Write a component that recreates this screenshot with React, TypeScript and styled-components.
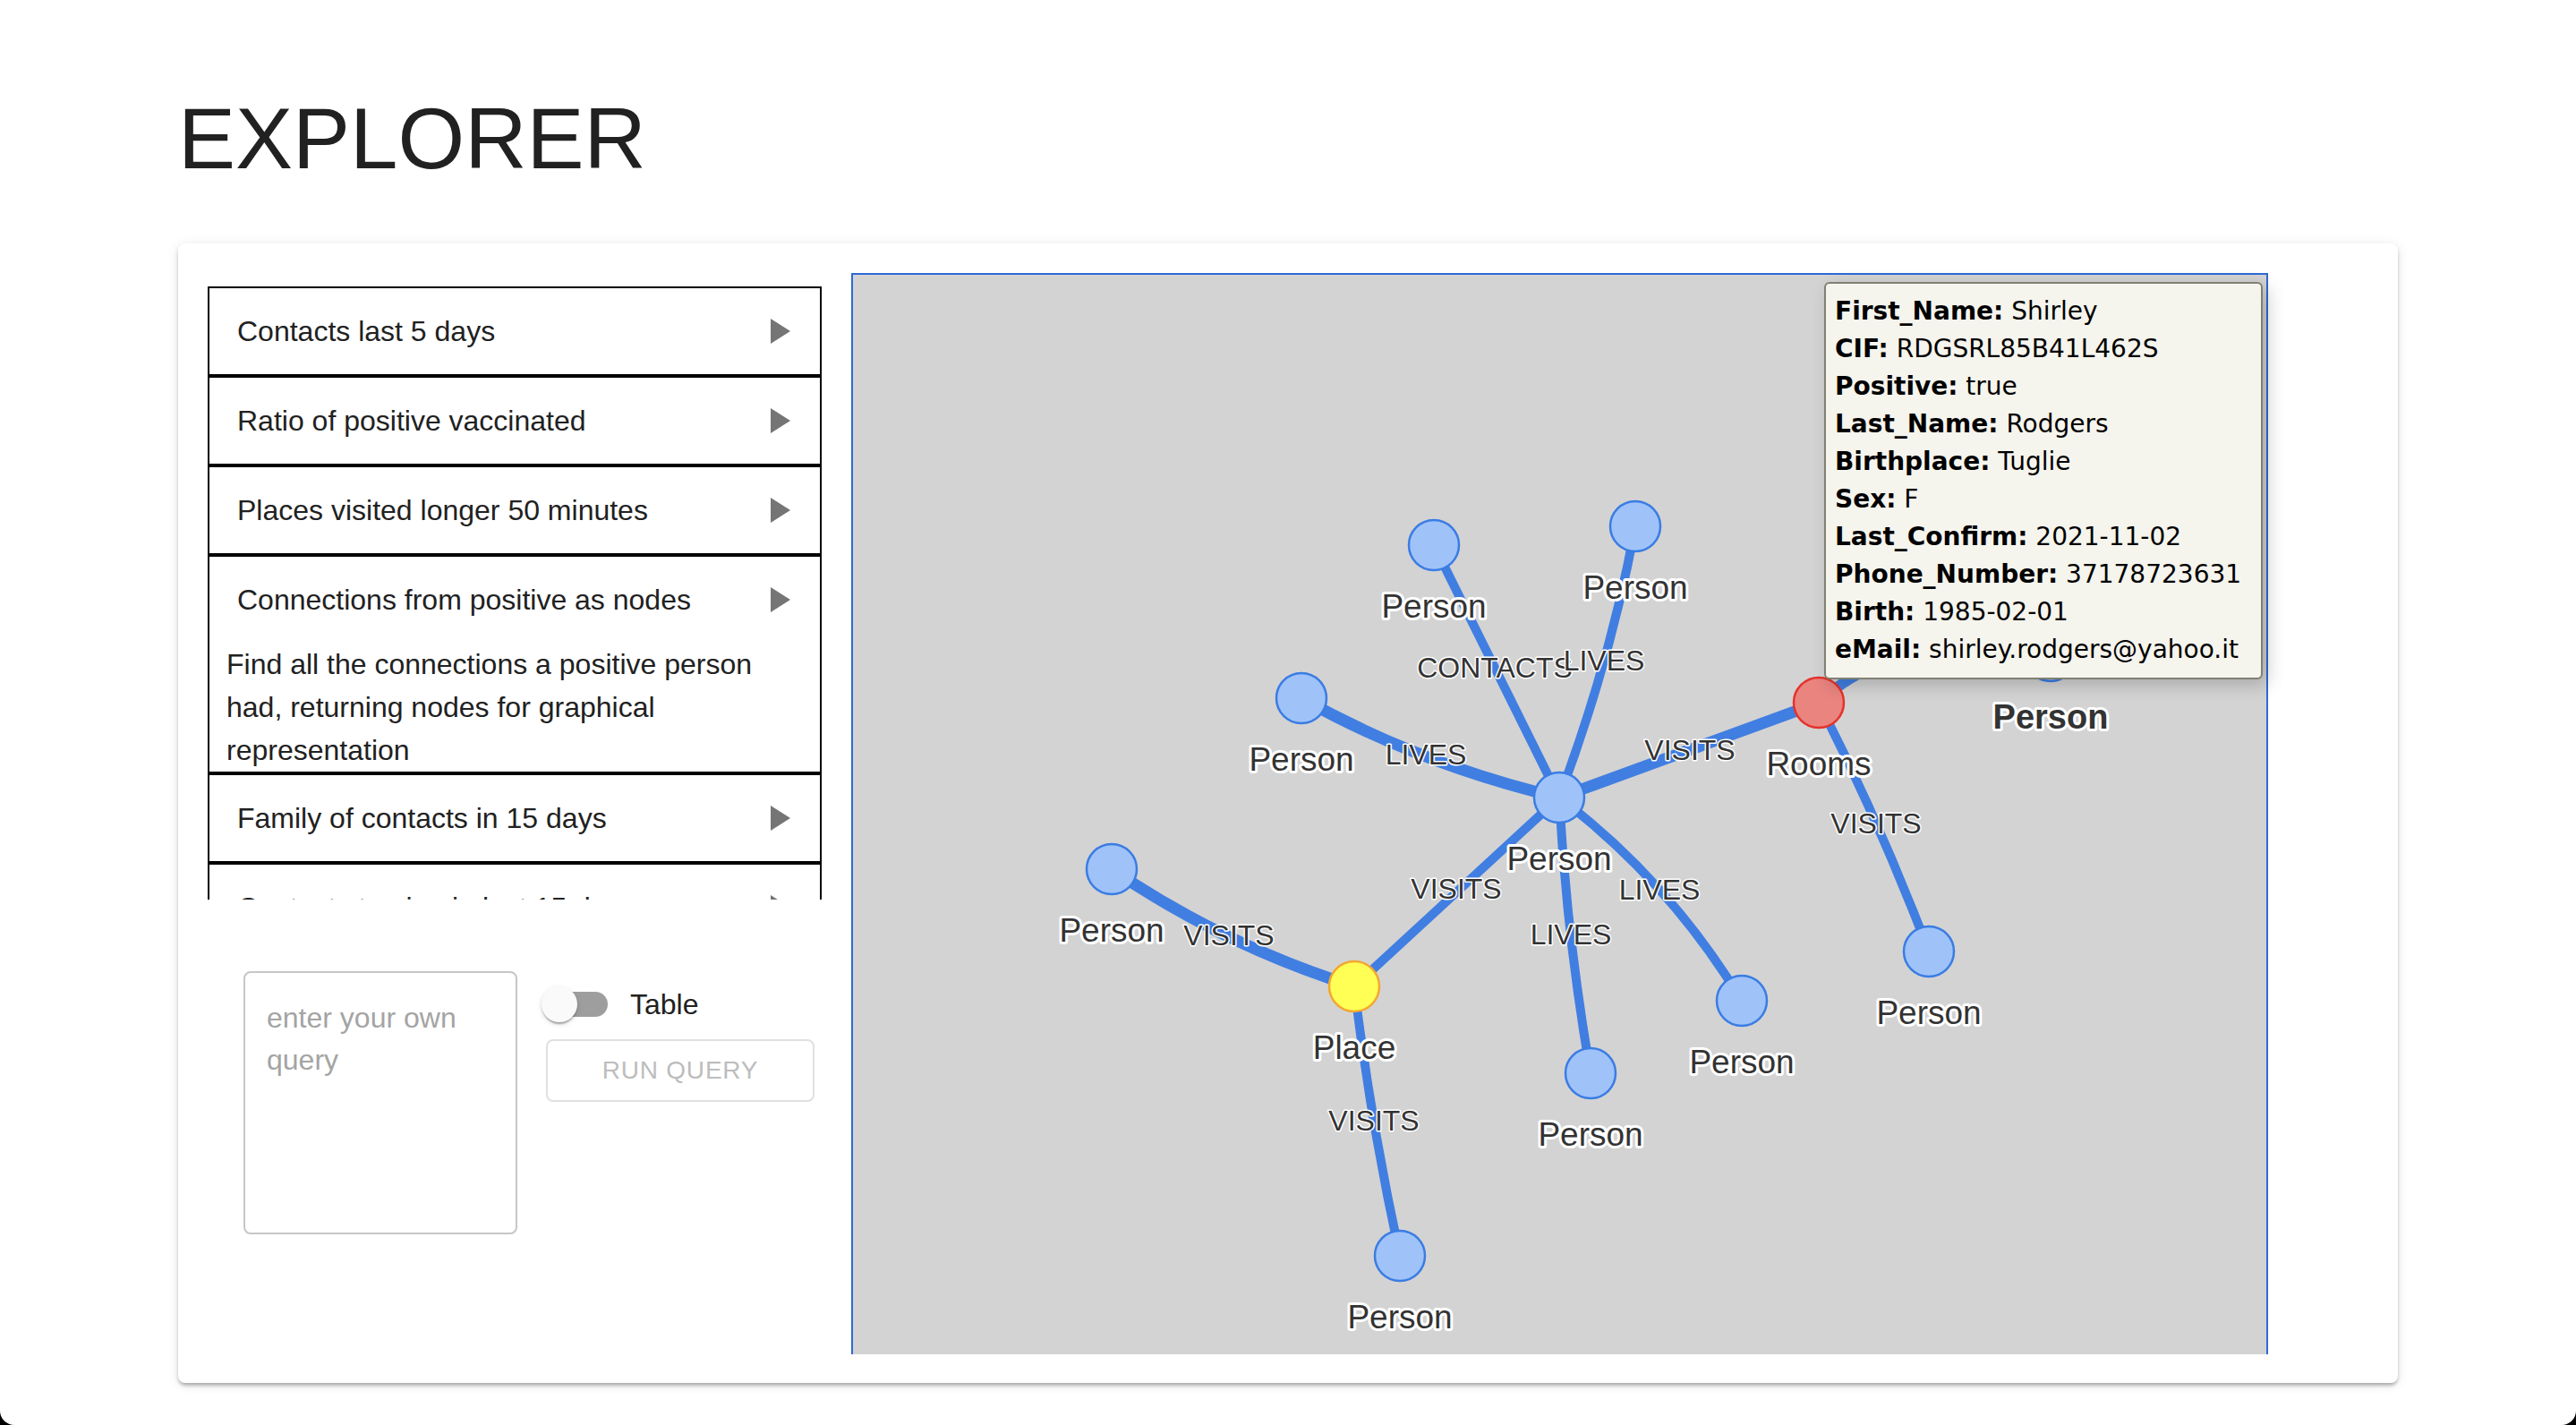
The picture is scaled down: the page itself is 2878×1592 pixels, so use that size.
import React from 'react'
import styled, { createGlobalStyle } from 'styled-components'

// ---------- data ----------
type Kind = 'person' | 'place' | 'positive'

type GraphNode = {
  id: string
  x: number
  y: number
  label: string
  kind?: Kind
  bold?: boolean
}

type GraphEdge = {
  from: string
  to: string
  label?: string
  lx?: number
  ly?: number
  // control point of the quadratic curve, if the edge bends
  cx?: number
  cy?: number
  width?: number
}

const queries = [
  { title: 'Contacts last 5 days' },
  { title: 'Ratio of positive vaccinated' },
  { title: 'Places visited longer 50 minutes' },
  {
    title: 'Connections from positive as nodes',
    description:
      'Find all the connections a positive person had, returning nodes for graphical representation'
  },
  { title: 'Family of contacts in 15 days' },
  { title: 'Contacts tracing in last 15 days' }
]

const nodes: GraphNode[] = [
  { id: 'i', x: 2290, y: 733, label: 'Person', bold: true },
  { id: 'n0', x: 1741, y: 891, label: 'Person' },
  { id: 'a', x: 1601, y: 609, label: 'Person' },
  { id: 'b', x: 1826, y: 588, label: 'Person' },
  { id: 'c', x: 1453, y: 780, label: 'Person' },
  { id: 'r', x: 2031, y: 785, label: 'Rooms', kind: 'positive' },
  { id: 'p', x: 1512, y: 1102, label: 'Place', kind: 'place' },
  { id: 'd', x: 1776, y: 1199, label: 'Person' },
  { id: 'e', x: 1945, y: 1118, label: 'Person' },
  { id: 'f', x: 1241, y: 971, label: 'Person' },
  { id: 'g', x: 1563, y: 1403, label: 'Person' },
  { id: 'h', x: 2154, y: 1063, label: 'Person' }
]

const edges: GraphEdge[] = [
  { from: 'r', to: 'i', cx: 2120, cy: 700, width: 12 },
  { from: 'n0', to: 'a', label: 'CONTACTS', lx: 1669, ly: 746, cx: 1667, cy: 742 },
  { from: 'n0', to: 'b', label: 'LIVES', lx: 1791, ly: 738, cx: 1799, cy: 736 },
  { from: 'n0', to: 'c', label: 'LIVES', lx: 1592, ly: 843, cx: 1585, cy: 854, width: 13 },
  { from: 'n0', to: 'r', label: 'VISITS', lx: 1887, ly: 838, width: 13 },
  { from: 'n0', to: 'p', label: 'VISITS', lx: 1626, ly: 993 },
  { from: 'n0', to: 'd', label: 'LIVES', lx: 1754, ly: 1044, cx: 1749, cy: 1043 },
  { from: 'n0', to: 'e', label: 'LIVES', lx: 1853, ly: 994, cx: 1863, cy: 983 },
  { from: 'p', to: 'f', label: 'VISITS', lx: 1372, ly: 1045, cx: 1366, cy: 1056, width: 13 },
  { from: 'p', to: 'g', label: 'VISITS', lx: 1534, ly: 1252, cx: 1530, cy: 1251 },
  { from: 'r', to: 'h', label: 'VISITS', lx: 2095, ly: 920, cx: 2098, cy: 916 }
]

const details: [string, string][] = [
  ['First_Name', 'Shirley'],
  ['CIF', 'RDGSRL85B41L462S'],
  ['Positive', 'true'],
  ['Last_Name', 'Rodgers'],
  ['Birthplace', 'Tuglie'],
  ['Sex', 'F'],
  ['Last_Confirm', '2021-11-02'],
  ['Phone_Number', '37178723631'],
  ['Birth', '1985-02-01'],
  ['eMail', 'shirley.rodgers@yahoo.it']
]

const nodeColors: Record<Kind, { fill: string; stroke: string }> = {
  person: { fill: '#9fc3f8', stroke: '#3a7ce4' },
  place: { fill: '#ffff55', stroke: '#f3a731' },
  positive: { fill: '#e9847f', stroke: '#e5322b' }
}

// ---------- component ----------
export default function App() {
  const byId = Object.fromEntries(nodes.map((n) => [n.id, n]))

  return (
    <>
      <GlobalStyle />
      <Page>
        <Title>EXPLORER</Title>

        <Card>
          <LeftColumn>
            <QueryList>
              {queries.map((q) => (
                <QueryItem key={q.title}>
                  <QueryHead>
                    <span>{q.title}</span>
                    <svg width="22" height="28" viewBox="0 0 22 28">
                      <polygon points="0,0 22,14 0,28" fill="#757575" />
                    </svg>
                  </QueryHead>
                  {q.description && <QueryBody>{q.description}</QueryBody>}
                </QueryItem>
              ))}
            </QueryList>

            <Controls>
              <QueryInput placeholder="enter your own query" />
              <Side>
                <ToggleRow>
                  <Switch>
                    <Track />
                    <Thumb />
                  </Switch>
                  Table
                </ToggleRow>
                <RunButton disabled>Run query</RunButton>
              </Side>
            </Controls>
          </LeftColumn>

          <GraphFrame>
            <svg width="1579" height="1206" viewBox="952 307 1579 1206">
              {edges.map((e) => {
                const a = byId[e.from]
                const b = byId[e.to]
                const d =
                  e.cx !== undefined
                    ? `M${a.x} ${a.y} Q${e.cx} ${e.cy} ${b.x} ${b.y}`
                    : `M${a.x} ${a.y} L${b.x} ${b.y}`
                return (
                  <path
                    key={e.from + e.to}
                    d={d}
                    fill="none"
                    stroke="#417ee1"
                    strokeWidth={e.width ?? 10}
                  />
                )
              })}
              {edges.map((e) =>
                e.label ? (
                  <EdgeLabel key={'l' + e.from + e.to} x={e.lx} y={e.ly}>
                    {e.label}
                  </EdgeLabel>
                ) : null
              )}
              {nodes.map((n) => {
                const c = nodeColors[n.kind ?? 'person']
                return (
                  <circle
                    key={n.id}
                    cx={n.x}
                    cy={n.y}
                    r={28}
                    fill={c.fill}
                    stroke={c.stroke}
                    strokeWidth={2.5}
                  />
                )
              })}
              {nodes.map((n) => (
                <NodeLabel key={'t' + n.id} x={n.x} y={n.y + 68} $bold={n.bold}>
                  {n.label}
                </NodeLabel>
              ))}
            </svg>

            <Tooltip>
              {details.map(([k, v]) => (
                <div key={k}>
                  <b>{k}:</b> {v}
                </div>
              ))}
            </Tooltip>
          </GraphFrame>
        </Card>
      </Page>
    </>
  )
}

// ---------- styles ----------
const GlobalStyle = createGlobalStyle`
  html, body {
    margin: 0;
    padding: 0;
    background: #000;
  }
  body {
    font-family: "Liberation Sans", Arial, sans-serif;
    color: #212121;
  }
  * {
    box-sizing: border-box;
  }
`

const Page = styled.div`
  height: 100vh;
  overflow: hidden;
  background: #fff;
  border-radius: 0 0 16px 16px;
  padding: 99px 199px 0;
`

const Title = styled.h1`
  margin: 0 0 61px;
  font-size: 96px;
  line-height: 112px;
  font-weight: 300;
  color: #212121;
`

const Card = styled.section`
  width: 2480px;
  height: 1273px;
  background: #fff;
  border-radius: 8px;
  box-shadow: 0 4px 4px -2px rgba(0, 0, 0, 0.2), 0 3px 4px 0 rgba(0, 0, 0, 0.14),
    0 2px 14px 0 rgba(0, 0, 0, 0.1);
  padding: 33px 0 0 33px;
  display: flex;
  align-items: flex-start;
  gap: 33px;
`

const LeftColumn = styled.div`
  width: 686px;
  margin-top: 15px;
  display: flex;
  flex-direction: column;
`

const QueryList = styled.div`
  height: 685px;
  overflow: hidden;
`

const QueryItem = styled.div`
  border: 2px solid #000;
`

const QueryHead = styled.div`
  height: 96px;
  display: flex;
  align-items: center;
  justify-content: space-between;
  padding: 0 33px 0 31px;
  font-size: 32px;
  color: #212121;
`

const QueryBody = styled.div`
  padding: 0 19px;
  font-size: 32px;
  line-height: 48px;
  color: #212121;
`

const Controls = styled.div`
  display: flex;
  align-items: flex-start;
  gap: 27px;
  margin: 80px 0 0 40px;
`

const QueryInput = styled.textarea`
  width: 306px;
  height: 294px;
  border: 2px solid #c6c6c6;
  border-radius: 8px;
  padding: 27px 24px;
  font-family: "Liberation Sans", Arial, sans-serif;
  font-size: 32px;
  line-height: 47px;
  resize: none;
  outline: none;
  &::placeholder {
    color: #a4a4a4;
  }
`

const Side = styled.div`
  display: flex;
  flex-direction: column;
  align-items: flex-start;
  padding-top: 17px;
`

const ToggleRow = styled.label`
  display: flex;
  align-items: center;
  gap: 25px;
  height: 40px;
  font-size: 32px;
  color: #212121;
`

const Switch = styled.span`
  position: relative;
  width: 74px;
  height: 40px;
`

const Track = styled.span`
  position: absolute;
  left: 6px;
  top: 6px;
  width: 68px;
  height: 28px;
  border-radius: 14px;
  background: #9e9e9e;
`

const Thumb = styled.span`
  position: absolute;
  left: 0;
  top: 0;
  width: 40px;
  height: 40px;
  border-radius: 50%;
  background: #fafafa;
  box-shadow: 0 4px 2px -2px rgba(0, 0, 0, 0.2), 0 2px 2px 0 rgba(0, 0, 0, 0.14),
    0 2px 6px 0 rgba(0, 0, 0, 0.12);
`

const RunButton = styled.button`
  margin: 19px 0 0 5px;
  width: 300px;
  height: 70px;
  border: 2px solid #e0e0e0;
  border-radius: 8px;
  background: #fff;
  color: #bdbdbd;
  font-family: "Liberation Sans", Arial, sans-serif;
  font-size: 28px;
  font-weight: 500;
  letter-spacing: 0.8px;
  text-transform: uppercase;
`

const GraphFrame = styled.div`
  position: relative;
  width: 1583px;
  height: 1208px;
  background: #d3d3d3;
  border: 2px solid #2f69d6;
  border-bottom: none;
  svg {
    display: block;
  }
`

const EdgeLabel = styled.text`
  font-family: "Liberation Sans", Arial, sans-serif;
  font-size: 32px;
  fill: #333;
  stroke: #fff;
  stroke-width: 3px;
  paint-order: stroke;
  stroke-linejoin: round;
  text-anchor: middle;
  dominant-baseline: central;
`

const NodeLabel = styled.text<{ $bold?: boolean }>`
  font-family: "Liberation Sans", Arial, sans-serif;
  font-size: ${(p) => (p.$bold ? '38px' : '37px')};
  font-weight: ${(p) => (p.$bold ? 700 : 400)};
  fill: #333;
  stroke: #fff;
  stroke-width: 6px;
  paint-order: stroke;
  stroke-linejoin: round;
  text-anchor: middle;
  dominant-baseline: central;
`

const Tooltip = styled.div`
  position: absolute;
  left: 1085px;
  top: 8px;
  width: 490px;
  padding: 10px;
  background: #f5f4ed;
  border: 2px solid #808074;
  border-radius: 6px;
  box-shadow: 6px 6px 20px rgba(0, 0, 0, 0.2);
  font-family: "DejaVu Sans", Verdana, sans-serif;
  font-size: 28px;
  line-height: 42px;
  color: #000;
  white-space: nowrap;
`
